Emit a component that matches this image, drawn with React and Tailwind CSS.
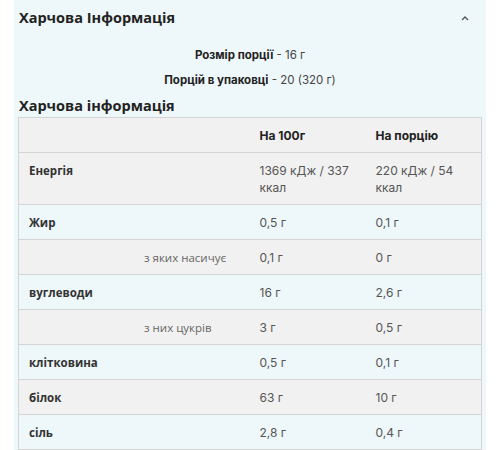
import React from "react";

const rows = [
  { label: "Енергія", a: <>1369 кДж / 337<br />ккал</>, b: <>220 кДж / 54<br />ккал</> },
  { label: "Жир", a: "0,5 г", b: "0,1 г" },
  { label: "з яких насичує", a: "0,1 г", b: "0 г", sub: true },
  { label: "вуглеводи", a: "16 г", b: "2,6 г" },
  { label: "з них цукрів", a: "3 г", b: "0,5 г", sub: true },
  { label: "клітковина", a: "0,5 г", b: "0,1 г" },
  { label: "білок", a: "63 г", b: "10 г" },
  { label: "сіль", a: "2,8 г", b: "0,4 г" },
];

const OS = "font-['Open_Sans',sans-serif]";
const MS = "font-['Inter',sans-serif]";

export default function App() {
  return (
    <div className="w-[500px] h-[450px] bg-white overflow-hidden">
      <div className="mx-[14px] h-full bg-[#eef7fa] px-[4px]">
        <div className="flex items-center justify-between h-[36px] pl-[1px] pr-[12px]">
          <h2 className={`${OS} text-[14.5px] font-bold text-[#222]`}>Харчова Інформація</h2>
          <svg width="10" height="8" viewBox="0 0 10 8" className="text-[#555]">
            <path d="M2 6 L5 3 L8 6" fill="none" stroke="currentColor" strokeWidth="1.4" />
          </svg>
        </div>
        <div className={`${MS} text-center text-[11.5px] text-[#444] leading-[18px] mt-[10px]`}>
          <p><span className="font-bold text-[#222]">Розмір порції</span> - 16 г</p>
          <p className="mt-[7px]"><span className="font-bold text-[#222]">Порцій в упаковці</span> - 20 (320 г)</p>
        </div>
        <h3 className={`${OS} text-[14.5px] font-bold text-[#222] pl-[1px] mt-[7px] leading-[20px]`}>Харчова інформація</h3>
        <table className="w-full border-collapse border border-[#d4d4d4] mt-[1px] text-[12px]">
          <colgroup>
            <col className="w-[231px]" />
            <col className="w-[116px]" />
            <col />
          </colgroup>
          <thead>
            <tr className="bg-[#f1f1f1]">
              <th className="px-[10px] pt-[9px] pb-[8px] leading-[17px]"></th>
              <th className={`${MS} text-left font-bold text-[#222] px-[10px] pt-[9px] pb-[8px] leading-[17px]`}>На 100г</th>
              <th className={`${MS} text-left font-bold text-[#222] px-[10px] pt-[9px] pb-[8px] leading-[17px]`}>На порцію</th>
            </tr>
          </thead>
          <tbody>
            {rows.map((r, i) => (
              <tr key={i} className={`${i % 2 === 0 ? "bg-[#f1f1f1]" : "bg-[#eef7fa]"} border-t border-[#d4d4d4] align-top`}>
                <td className={`${OS} text-[11.5px] px-[10px] pt-[9px] pb-[8px] leading-[17px] ${r.sub ? "pl-[125px] font-normal text-[#666]" : "font-bold text-[#333]"}`}>{r.label}</td>
                <td className={`${MS} px-[10px] pt-[9px] pb-[8px] leading-[17px] text-[#555]`}>{r.a}</td>
                <td className={`${MS} px-[10px] pt-[9px] pb-[8px] leading-[17px] text-[#555]`}>{r.b}</td>
              </tr>
            ))}
          </tbody>
        </table>
      </div>
    </div>
  );
}
